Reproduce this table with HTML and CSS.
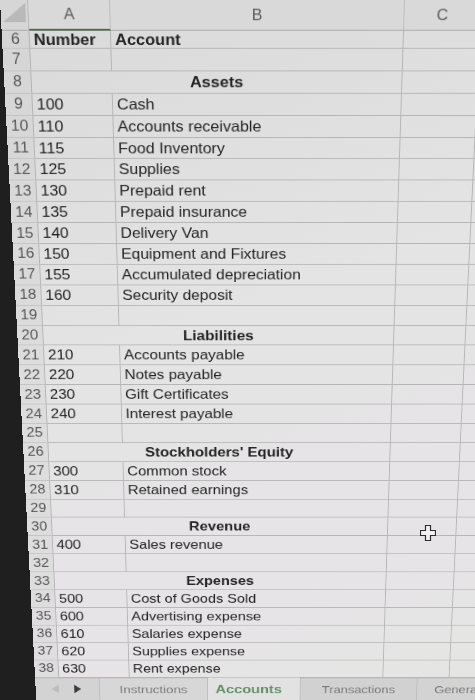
FILE: index.html
```html
<!DOCTYPE html>
<html>
<head>
<meta charset="utf-8">
<link rel="stylesheet" href="styles.css">
</head>
<body>
<div class="viewport">
  <div class="sheet">
    <div class="corner"><svg width="26" height="24" viewBox="0 0 26 24"><polygon points="25,3 25,23 2,23" fill="#b9b9b9"/></svg></div>
    <div class="ch sel">A</div><div class="ch">B</div><div class="ch">C</div><div class="ch"></div>

    <div class="rn">6</div><div class="c ca bold">Number</div><div class="c cb bold">Account</div><div class="c"></div><div class="c"></div>
    <div class="rn">7</div><div class="c ca"></div><div class="c cb"></div><div class="c"></div><div class="c"></div>
    <div class="rn">8</div><div class="c merged">Assets</div><div class="c"></div><div class="c"></div>
    <div class="rn">9</div><div class="c ca">100</div><div class="c cb">Cash</div><div class="c"></div><div class="c"></div>
    <div class="rn">10</div><div class="c ca">110</div><div class="c cb">Accounts receivable</div><div class="c"></div><div class="c"></div>
    <div class="rn">11</div><div class="c ca">115</div><div class="c cb">Food Inventory</div><div class="c"></div><div class="c"></div>
    <div class="rn">12</div><div class="c ca">125</div><div class="c cb">Supplies</div><div class="c"></div><div class="c"></div>
    <div class="rn">13</div><div class="c ca">130</div><div class="c cb">Prepaid rent</div><div class="c"></div><div class="c"></div>
    <div class="rn">14</div><div class="c ca">135</div><div class="c cb">Prepaid insurance</div><div class="c"></div><div class="c"></div>
    <div class="rn">15</div><div class="c ca">140</div><div class="c cb">Delivery Van</div><div class="c"></div><div class="c"></div>
    <div class="rn">16</div><div class="c ca">150</div><div class="c cb">Equipment and Fixtures</div><div class="c"></div><div class="c"></div>
    <div class="rn">17</div><div class="c ca">155</div><div class="c cb">Accumulated depreciation</div><div class="c"></div><div class="c"></div>
    <div class="rn">18</div><div class="c ca">160</div><div class="c cb">Security deposit</div><div class="c"></div><div class="c"></div>
    <div class="rn">19</div><div class="c ca"></div><div class="c cb"></div><div class="c"></div><div class="c"></div>
    <div class="rn">20</div><div class="c merged">Liabilities</div><div class="c"></div><div class="c"></div>
    <div class="rn">21</div><div class="c ca">210</div><div class="c cb">Accounts payable</div><div class="c"></div><div class="c"></div>
    <div class="rn">22</div><div class="c ca">220</div><div class="c cb">Notes payable</div><div class="c"></div><div class="c"></div>
    <div class="rn">23</div><div class="c ca">230</div><div class="c cb">Gift Certificates</div><div class="c"></div><div class="c"></div>
    <div class="rn">24</div><div class="c ca">240</div><div class="c cb">Interest payable</div><div class="c"></div><div class="c"></div>
    <div class="rn">25</div><div class="c ca"></div><div class="c cb"></div><div class="c"></div><div class="c"></div>
    <div class="rn">26</div><div class="c merged">Stockholders' Equity</div><div class="c"></div><div class="c"></div>
    <div class="rn">27</div><div class="c ca">300</div><div class="c cb">Common stock</div><div class="c"></div><div class="c"></div>
    <div class="rn">28</div><div class="c ca">310</div><div class="c cb">Retained earnings</div><div class="c"></div><div class="c"></div>
    <div class="rn">29</div><div class="c ca"></div><div class="c cb"></div><div class="c"></div><div class="c"></div>
    <div class="rn">30</div><div class="c merged">Revenue</div><div class="c"></div><div class="c"></div>
    <div class="rn">31</div><div class="c ca">400</div><div class="c cb">Sales revenue</div><div class="c"></div><div class="c"></div>
    <div class="rn">32</div><div class="c ca"></div><div class="c cb"></div><div class="c"></div><div class="c"></div>
    <div class="rn">33</div><div class="c merged">Expenses</div><div class="c"></div><div class="c"></div>
    <div class="rn">34</div><div class="c ca">500</div><div class="c cb">Cost of Goods Sold</div><div class="c"></div><div class="c"></div>
    <div class="rn">35</div><div class="c ca">600</div><div class="c cb">Advertising expense</div><div class="c"></div><div class="c"></div>
    <div class="rn">36</div><div class="c ca">610</div><div class="c cb">Salaries expense</div><div class="c"></div><div class="c"></div>
    <div class="rn">37</div><div class="c ca">620</div><div class="c cb">Supplies expense</div><div class="c"></div><div class="c"></div>
    <div class="rn">38</div><div class="c ca">630</div><div class="c cb">Rent expense</div><div class="c"></div><div class="c"></div>

    <div class="tabbar">
      <div class="nav">
        <svg width="10" height="12" viewBox="0 0 10 12"><polygon points="9,0 9,12 1,6" fill="#bdbdbd"/></svg>
        <svg width="10" height="12" viewBox="0 0 10 12"><polygon points="1,0 1,12 9,6" fill="#3e3e3e"/></svg>
      </div>
      <div class="tab t-instr">Instructions</div>
      <div class="tab active t-acc">Accounts</div>
      <div class="tab t-trans">Transactions</div>
      <div class="tab t-gen">General</div>
    </div>
  </div>
  <svg class="cursor" width="16" height="16" viewBox="0 0 16 16"><polygon points="5.5,0.5 10.5,0.5 10.5,5.5 15.5,5.5 15.5,10.5 10.5,10.5 10.5,15.5 5.5,15.5 5.5,10.5 0.5,10.5 0.5,5.5 5.5,5.5" fill="#f2f2f2" stroke="#2e2e2e" stroke-width="1.2"/></svg>
</div>
</body>
</html>
```

FILE: styles.css
```css
html, body {
  margin: 0;
  padding: 0;
  background: #1e1e1e;
  overflow: hidden;
}

.viewport {
  position: relative;
  width: 475px;
  height: 700px;
  overflow: hidden;
  background: #1f1f1f;
  perspective: 1294px;
  perspective-origin: 250px 0;
}

.sheet {
  width: 570px;
  height: 860px;
  transform-origin: 250px 0;
  transform: rotateX(-15deg);
  display: grid;
  grid-template-columns: 28px 82px 295px 77px 1fr;
  grid-template-rows: 32px 19px repeat(32, 23.9px) 1fr;
  background: linear-gradient(160deg, #d9d9d9 0%, #e4e4e4 40%, #e7e4e7 75%, #e3e6e2 100%);
  font-family: "Liberation Sans", Arial, sans-serif;
  font-size: 16.5px;
  color: #242424;
}

.corner {
  display: flex;
  align-items: flex-start;
  justify-content: flex-start;
  background: #d6d6d6;
  border-right: 1px solid #b8b8b8;
  border-bottom: 1px solid #a9a9a9;
}

.ch {
  display: flex;
  align-items: center;
  justify-content: center;
  background: #d9d9d9;
  color: #5c5c5c;
  font-size: 16px;
  border-right: 1px solid #bdbdbd;
  border-bottom: 1px solid #a9a9a9;
}

.ch.sel {
  border-bottom: 2px solid #4f6651;
}

.rn {
  display: flex;
  align-items: center;
  justify-content: center;
  color: #575757;
  font-size: 16px;
  background: rgba(200, 200, 200, 0.25);
  border-right: 1px solid #b4b4b4;
  border-bottom: 1px solid #c4c4c4;
}

.c {
  display: flex;
  align-items: center;
  padding-left: 4px;
  white-space: nowrap;
  border-right: 1px solid #b6b6b6;
  border-bottom: 1px solid #b6b6b6;
  min-width: 0;
}

.ca {
  padding-left: 4px;
}

.bold {
  font-weight: bold;
}

.merged {
  grid-column: span 2;
  justify-content: center;
  font-weight: bold;
  padding-left: 0;
}

.tabbar {
  grid-column: 1 / -1;
  display: flex;
  background: #d3d3d3;
  border-top: 1px solid #b4b4b4;
  font-size: 15px;
  color: #7a7a7a;
}

.nav {
  width: 74px;
  display: flex;
  align-items: flex-start;
  justify-content: flex-end;
  gap: 16px;
  padding: 9px 20px 0 0;
  box-sizing: border-box;
}

.tab {
  display: flex;
  align-items: flex-start;
  justify-content: center;
  padding-top: 7px;
  box-sizing: border-box;
  border-left: 1px solid #bdbdbd;
  white-space: nowrap;
  overflow: hidden;
}

.t-instr { width: 126px; background: #d7d7d7; font-size: 15.5px; }
.t-acc { width: 108px; padding-right: 12px; }
.t-trans { width: 136px; background: #d1d1d1; }
.t-gen { flex: 1; justify-content: flex-start; padding-left: 20px; }

.tab.active {
  background: #e2e2e2;
  color: #5f9064;
  font-weight: bold;
  font-size: 17px;
  margin-top: -1px;
}

.cursor {
  position: absolute;
  left: 420px;
  top: 525px;
}
```
